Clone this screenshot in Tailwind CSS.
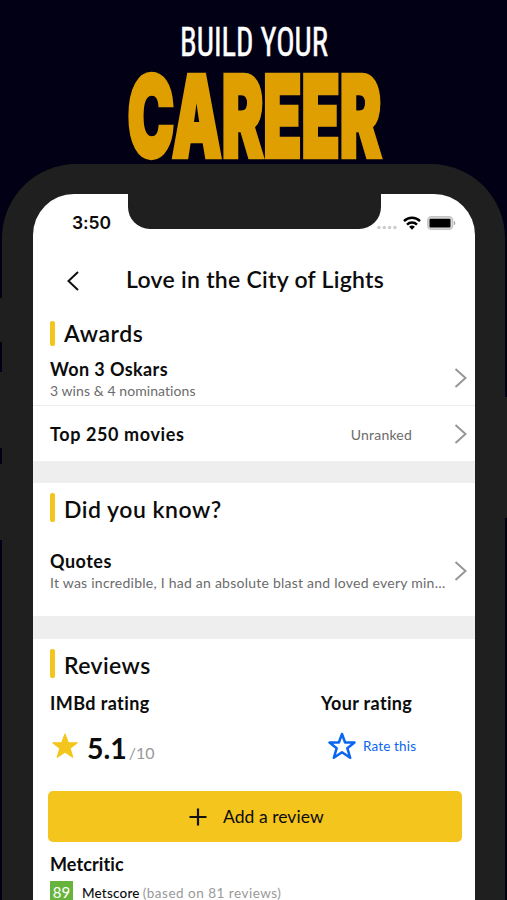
<!DOCTYPE html>
<html lang="en">
<head>
    <meta charset="UTF-8">
    <meta name="viewport" content="width=device-width, initial-scale=1.0">
    <title>Build your career</title>
    <script src="https://cdn.jsdelivr.net/npm/@tailwindcss/browser@4"></script>
</head>
<body class="bg-[#010015] h-[900px] overflow-hidden font-['Lato','Open_Sans',sans-serif] text-[#0c0c0c]">
    <header class="h-[164px]">
        <svg class="block w-[507px] h-[164px]" viewBox="0 0 507 164">
            <text x="180" y="56" textLength="148" lengthAdjust="spacingAndGlyphs" stroke="#fff" stroke-width="0.5" class="font-['Roboto'] font-normal [font-stretch:75%] text-[40.5px] fill-white">BUILD YOUR</text>
            <text x="127.5" y="156.5" textLength="254" lengthAdjust="spacingAndGlyphs" stroke="#e09f00" stroke-width="4.5" class="font-['Inter'] font-black text-[113px] fill-[#e09f00]">CAREER</text>
        </svg>
    </header>

    <!-- Phone -->
    <div class="relative ml-[2px] w-[503px] h-[736px] pt-[30px] pl-[31px] bg-[#1f1f1f] rounded-t-[74px]">
        <!-- Side buttons -->
        <div class="absolute -left-[2px] top-[134px] w-[2px] h-[44px] bg-[#1f1f1f]"></div>
        <div class="absolute -left-[2px] top-[208px] w-[2px] h-[76px] bg-[#1f1f1f]"></div>
        <div class="absolute -left-[2px] top-[300px] w-[2px] h-[76px] bg-[#1f1f1f]"></div>
        <div class="absolute -right-[2px] top-[233px] w-[2px] h-[121px] bg-[#1f1f1f]"></div>

        <main class="relative w-[442px] h-[706px] bg-white rounded-t-[41px] overflow-hidden">
            <div class="absolute left-[95px] top-0 w-[253px] h-[35px] bg-[#1f1f1f] rounded-b-[22px]"></div>

            <!-- Status bar -->
            <div class="flex items-center justify-between h-[58px] pl-[39px] pr-[19px]">
                <span class="mt-px font-['Inter'] font-semibold text-[17.5px] tracking-[-0.1px]">3:50</span>
                <div class="flex items-center">
                    <svg class="w-[20px] h-[5px] mt-[9px] mr-[6px]" viewBox="0 0 20 5" fill="#cccccc">
                        <circle cx="2" cy="2.5" r="1.7"/>
                        <circle cx="7.3" cy="2.5" r="1.7"/>
                        <circle cx="12.6" cy="2.5" r="1.7"/>
                        <circle cx="17.9" cy="2.5" r="1.7"/>
                    </svg>
                    <svg class="w-[18px] h-[14px] -mt-px mr-[6px]" viewBox="0 0 18 14" fill="none" stroke="#000" stroke-width="2.5">
                        <path d="M1 5.1a11.4 11.4 0 0 1 16 0"/>
                        <path d="M4 8.6a7.2 7.2 0 0 1 10 0"/>
                        <path d="M9 13.7l-2.9-2.9a4.2 4.2 0 0 1 5.8 0z" fill="#000" stroke="none"/>
                    </svg>
                    <svg class="w-[29px] h-[14px]" viewBox="0 0 29 14">
                        <rect x="0.8" y="0.8" width="24.8" height="12.4" rx="3.6" fill="#dedede" stroke="#c4c4c4" stroke-width="1.5"/>
                        <rect x="2.5" y="2.7" width="21" height="8.8" rx="1" fill="#000"/>
                        <path d="M26.9 4.7c2 .9 2 3.7 0 4.6z" fill="#a8a8a8"/>
                    </svg>
                </div>
            </div>

            <!-- Nav bar -->
            <div class="flex items-center h-[56px] pl-[34px]">
                <svg class="w-[12px] h-[20px] mt-px" viewBox="0 0 12 20" fill="none" stroke="#111" stroke-width="2">
                    <path d="M11 1L1.5 10L11 19"/>
                </svg>
                <h1 class="ml-[47px] -mt-[2px] font-semibold text-[23px] tracking-[0.28px]">Love in the City of Lights</h1>
            </div>

            <!-- Awards -->
            <section>
                <div class="flex items-center h-[46px] pt-[5px] pl-[17px]">
                    <div class="w-[5px] h-[25px] rounded-[2px] bg-[#f4c51c]"></div>
                    <h2 class="ml-[9px] font-semibold text-[23px] leading-[25px] tracking-[0.6px]">Awards</h2>
                </div>
                <div class="flex items-center justify-between h-[52px] pl-[17px] pr-[8px] border-b border-[#ececec]">
                    <div>
                        <p class="font-bold text-[18px] leading-[22px] tracking-[0.4px]">Won 3 Oskars</p>
                        <p class="text-[14px] leading-[21px] tracking-[0.07px] text-[#6b6b6b]">3 wins &amp; 4 nominations</p>
                    </div>
                    <svg class="w-[13px] h-[20px] -mt-[3px]" viewBox="0 0 13 20" fill="none" stroke="#979797" stroke-width="2">
                        <path d="M1.5 1L11.5 10L1.5 19"/>
                    </svg>
                </div>
                <div class="flex items-center h-[55px] pl-[17px] pr-[8px]">
                    <p class="grow font-bold text-[18px] leading-[22px] tracking-[0.6px]">Top 250 movies</p>
                    <span class="mr-[42px] mt-px text-[14px] tracking-[0.2px] text-[#6b6b6b]">Unranked</span>
                    <svg class="w-[13px] h-[20px]" viewBox="0 0 13 20" fill="none" stroke="#979797" stroke-width="2">
                        <path d="M1.5 1L11.5 10L1.5 19"/>
                    </svg>
                </div>
            </section>

            <div class="h-[22px] bg-[#eeeeee]"></div>

            <!-- Did you know -->
            <section>
                <div class="flex items-start h-[43px] pt-[10px] pl-[17px]">
                    <div class="w-[5px] h-[29px] rounded-[2px] bg-[#f4c51c]"></div>
                    <h2 class="ml-[9px] mt-[4px] font-semibold text-[23px] leading-[25px] tracking-[0.5px]">Did you know?</h2>
                </div>
                <div class="flex items-center justify-between h-[90px] pl-[17px] pr-[8px]">
                    <div class="pt-[2px]">
                        <p class="font-bold text-[18px] leading-[22px] tracking-[0.5px]">Quotes</p>
                        <p class="text-[14px] leading-[22px] tracking-[0.24px] text-[#6b6b6b] whitespace-nowrap">It was incredible, I had an absolute blast and loved every min…</p>
                    </div>
                    <svg class="w-[13px] h-[20px]" viewBox="0 0 13 20" fill="none" stroke="#979797" stroke-width="2">
                        <path d="M1.5 1L11.5 10L1.5 19"/>
                    </svg>
                </div>
            </section>

            <div class="h-[23px] bg-[#eeeeee]"></div>

            <!-- Reviews -->
            <section>
                <div class="flex items-start h-[52px] pt-[10px] pl-[17px]">
                    <div class="w-[5px] h-[29px] rounded-[2px] bg-[#f4c51c]"></div>
                    <h2 class="ml-[9px] mt-[4px] font-semibold text-[23px] leading-[25px] tracking-[0.4px]">Reviews</h2>
                </div>
                <div class="grid grid-cols-[271px_1fr] pl-[17px]">
                    <div>
                        <p class="font-bold text-[18px] leading-[24px] tracking-[0.4px]">IMBd rating</p>
                        <div class="flex items-center h-[62px] pl-[2px]">
                            <svg class="w-[26px] h-[26px]" viewBox="0 0 24 24" fill="#f4c51c" stroke="#f4c51c" stroke-width="1" stroke-linejoin="round">
                                <path d="M12 0.9L15 9h8.3l-6.6 5.1 2.5 8.3L12 17.5 4.8 22.4l2.5-8.3L0.7 9H9z"/>
                            </svg>
                            <div class="flex items-baseline ml-[9px] mt-[4px]">
                                <span class="font-bold text-[28.5px] leading-[32px]">5.1</span>
                                <span class="ml-[2px] text-[16px] text-[#999999]">/10</span>
                            </div>
                        </div>
                    </div>
                    <div>
                        <p class="font-bold text-[18px] leading-[24px] tracking-[0.35px]">Your rating</p>
                        <div class="flex items-center h-[62px] pl-[7px] text-[#0a66f0]">
                            <svg class="w-[28px] h-[28px]" viewBox="0 0 28 28" fill="none" stroke="currentColor" stroke-width="2.5" stroke-linejoin="round">
                                <path d="M14 2L17.1 10.5H26.5L19.3 16.2L22.2 25.8L14 20.2L5.8 25.8L8.7 16.2L1.5 10.5H10.9Z"/>
                            </svg>
                            <span class="ml-[7px] text-[13.5px] tracking-[0.15px]">Rate this</span>
                        </div>
                    </div>
                </div>
                <button class="flex items-center mt-[14px] ml-[15px] w-[414px] h-[51px] pl-[141px] rounded-[5px] bg-[#f4c51c]">
                    <svg class="w-[18px] h-[18px]" viewBox="0 0 18 18" fill="none" stroke="#111" stroke-width="2.2">
                        <path d="M9 0.5V17.5M0.5 9H17.5"/>
                    </svg>
                    <span class="ml-[16px] mt-[2px] text-[17.5px] tracking-[0.05px]">Add a review</span>
                </button>
                <p class="mt-[11px] pl-[17px] font-bold text-[18px] leading-[22px] tracking-[0.1px]">Metcritic</p>
                <div class="flex items-center mt-[6px] pl-[17px] text-[13.5px]">
                    <span class="w-[23px] h-[23px] bg-[#67b43c] text-center text-[15px] leading-[22px] text-white">89</span>
                    <span class="ml-[9px] mt-px font-medium tracking-[0.2px]">Metscore</span>
                    <span class="ml-[3px] mt-px tracking-[0.5px] text-[#999999]">(based on 81 reviews)</span>
                </div>
            </section>
        </main>
    </div>
</body>
</html>
